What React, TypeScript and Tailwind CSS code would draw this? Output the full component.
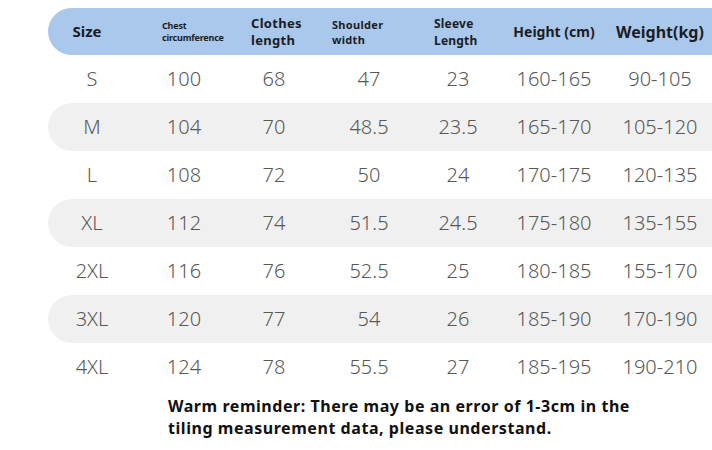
const rows = [
  ["S", "100", "68", "47", "23", "160-165", "90-105"],
  ["M", "104", "70", "48.5", "23.5", "165-170", "105-120"],
  ["L", "108", "72", "50", "24", "170-175", "120-135"],
  ["XL", "112", "74", "51.5", "24.5", "175-180", "135-155"],
  ["2XL", "116", "76", "52.5", "25", "180-185", "155-170"],
  ["3XL", "120", "77", "54", "26", "185-190", "170-190"],
  ["4XL", "124", "78", "55.5", "27", "185-195", "190-210"],
];

const cols = "grid grid-cols-[88px_96px_84px_106px_72px_120px_92px] items-center";

export default function App() {
  return (
    <div className="w-[712px] h-[450px] overflow-hidden bg-white pt-2 font-['Noto_Sans',sans-serif]">
      <div className="pl-[48px]">
        <div className={`${cols} h-[47px] rounded-l-full bg-[#a9c8eb] text-[#1c1c24] font-bold`}>
          <div className="pr-[10px] text-center text-[15px]">Size</div>
          <div className="pl-[26px] text-[9px] leading-[12px] tracking-[-0.2px]">
            Chest
            <br />
            circumference
          </div>
          <div className="pl-[19px] text-[13px] leading-[17px] tracking-[0.3px]">
            Clothes
            <br />
            length
          </div>
          <div className="pl-[16px] text-[11px] leading-[15px] tracking-[0.3px]">
            Shoulder
            <br />
            width
          </div>
          <div className="pl-[12px] text-[12px] leading-[17px] tracking-[0.2px]">
            Sleeve
            <br />
            Length
          </div>
          <div className="text-center text-[14px] whitespace-nowrap">Height (cm)</div>
          <div className="text-center text-[16px] whitespace-nowrap">Weight(kg)</div>
        </div>
        {rows.map((r, i) => (
          <div
            key={r[0]}
            className={`${cols} h-12 text-[20px] font-light text-[#585858] ${i % 2 === 1 ? "rounded-l-full bg-[#f0f0f0]" : ""}`}
          >
            {r.map((v, j) => (
              <div key={j} className="text-center whitespace-nowrap">
                {v}
              </div>
            ))}
          </div>
        ))}
      </div>
      <p className="mt-[4px] pl-[168px] text-[16px] leading-[22px] tracking-[0.55px] font-bold text-[#111]">
        Warm reminder: There may be an error of 1-3cm in the
        <br />
        tiling measurement data, please understand.
      </p>
    </div>
  );
}
